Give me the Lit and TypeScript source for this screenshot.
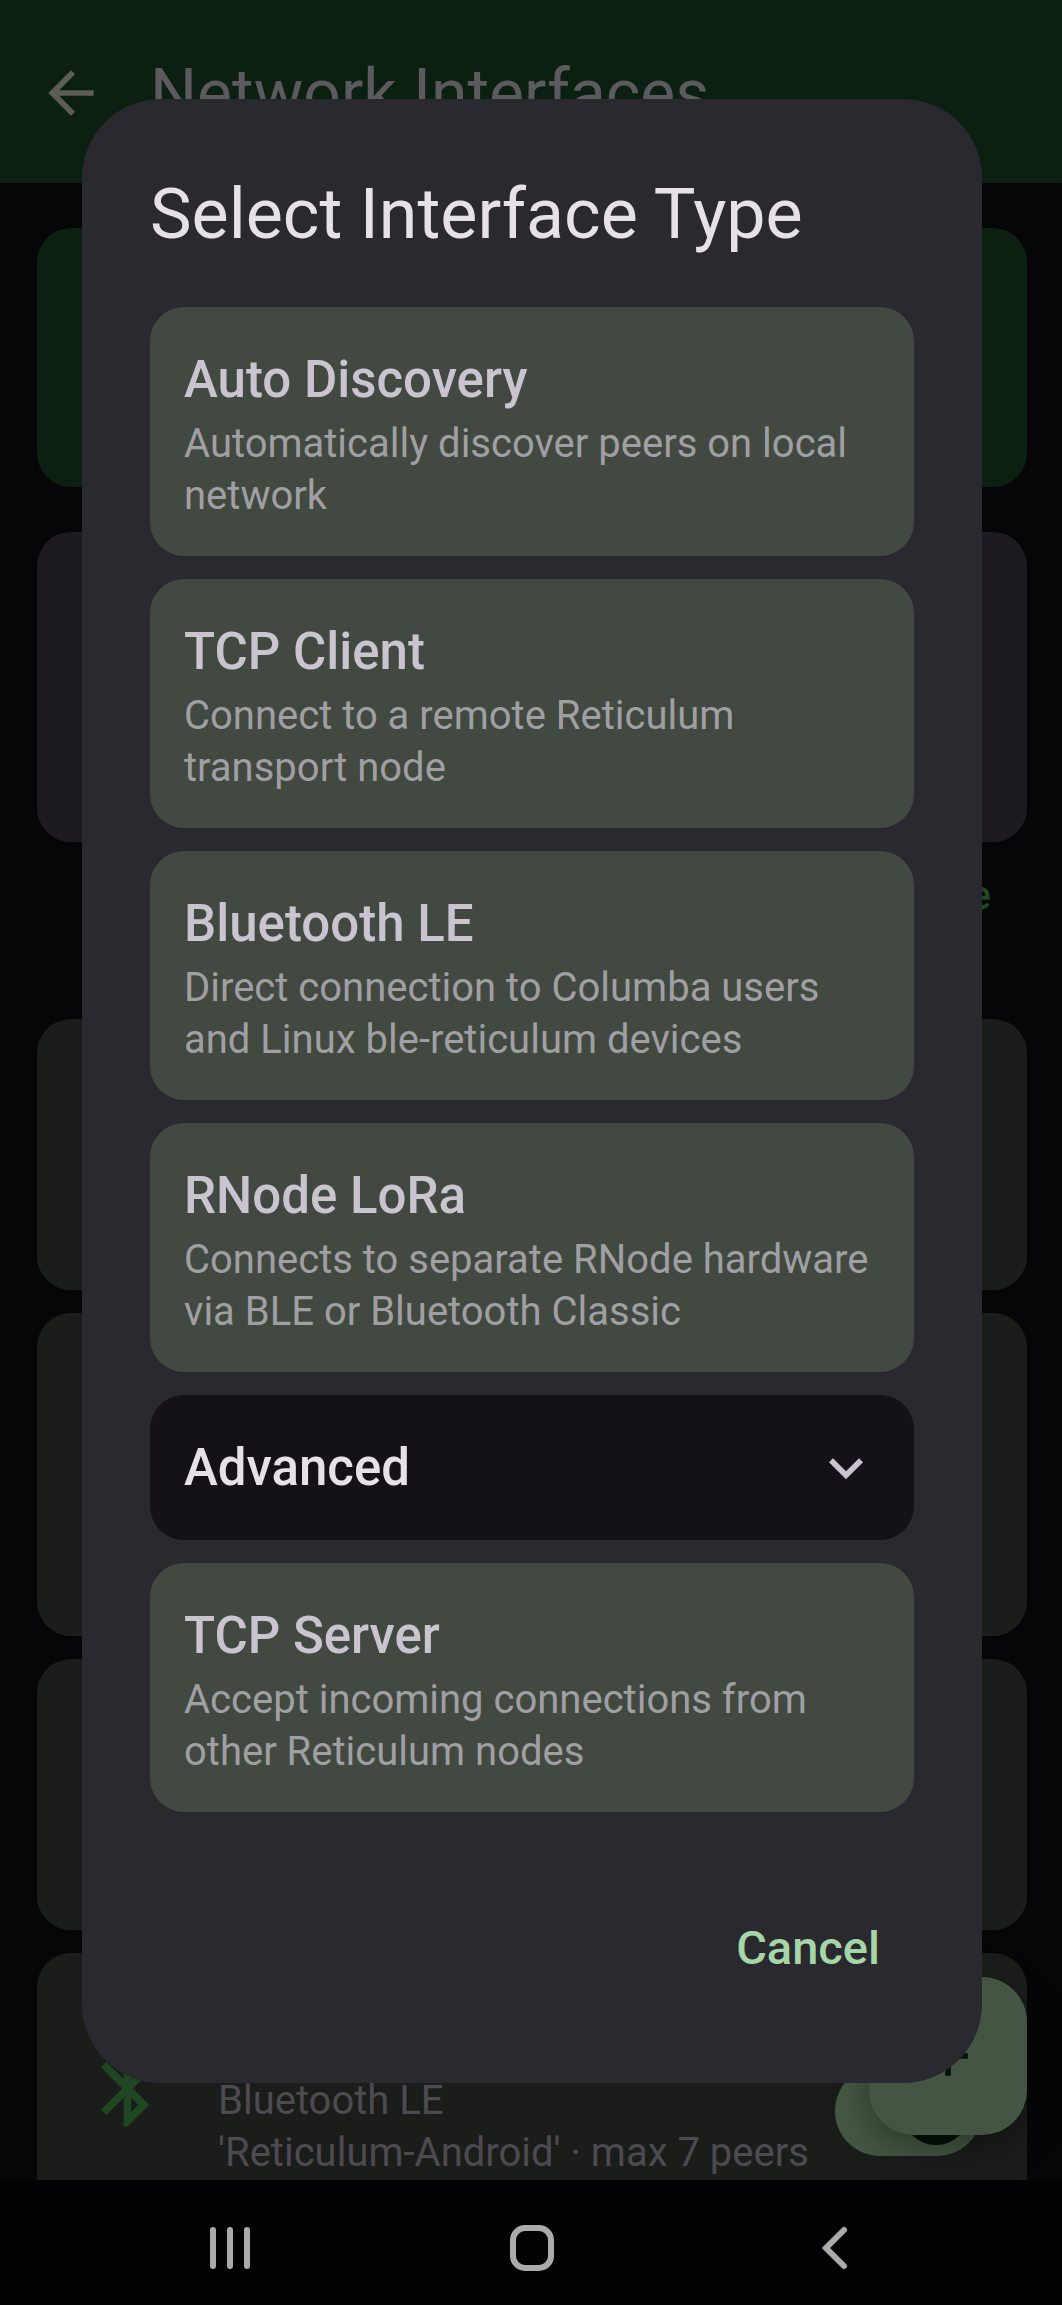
import { LitElement, html, css, svg, nothing } from "lit";
import { customElement, property } from "lit/decorators.js";

const icons = {
  back: svg`<path d="M20 11H7.83l5.59-5.59L12 4l-8 8 8 8 1.41-1.41L7.83 13H20v-2z"/>`,
  expand: svg`<path d="M16.59 8.59 12 13.17 7.41 8.59 6 10l6 6 6-6z"/>`,
  add: svg`<path d="M19 13h-6v6h-2v-6H5v-2h6V5h2v6h6v2z"/>`,
  bluetooth: svg`<path d="M17.71 7.71 12 2h-1v7.59L6.41 5 5 6.41 10.59 12 5 17.59 6.41 19 11 14.41V22h1l5.71-5.71-4.3-4.29 4.3-4.29zM13 5.83l1.88 1.88L13 9.59V5.83zm1.88 10.46L13 18.17v-3.76l1.88 1.88z"/>`,
};

interface Choice {
  name: string;
  detail: string;
}

const basic: Choice[] = [
  { name: "Auto Discovery", detail: "Automatically discover peers on local network" },
  { name: "TCP Client", detail: "Connect to a remote Reticulum transport node" },
  { name: "Bluetooth LE", detail: "Direct connection to Columba users and Linux ble-reticulum devices" },
  { name: "RNode LoRa", detail: "Connects to separate RNode hardware via BLE or Bluetooth Classic" },
];

const advanced: Choice[] = [
  { name: "TCP Server", detail: "Accept incoming connections from other Reticulum nodes" },
];

@customElement("interface-choice")
export class InterfaceChoice extends LitElement {
  @property() name = "";
  @property() detail = "";
  @property({ type: Boolean }) group = false;

  static styles = css`
    :host {
      display: block;
    }
    .choice {
      display: flex;
      align-items: center;
      justify-content: space-between;
      width: 100%;
      padding: 34px;
      border: 0;
      border-radius: 34px;
      background: #424940;
      color: #cac4d0;
      font: inherit;
      text-align: left;
    }
    .choice.group {
      background: #141218;
      color: #e6e0e9;
    }
    .name {
      display: block;
      font-size: 51px;
      font-weight: 500;
      line-height: 77px;
    }
    .detail {
      display: block;
      font-size: 40px;
      line-height: 52px;
      color: #a09fa3;
    }
    .chevron {
      width: 68px;
      height: 68px;
      fill: #cac4d0;
    }
  `;

  render() {
    return html`<button
      class=${this.group ? "choice group" : "choice"}
      type="button"
      aria-expanded=${this.group ? "true" : nothing}
    >
      <span>
        <span class="name">${this.name}</span>
        ${this.detail ? html`<span class="detail">${this.detail}</span>` : nothing}
      </span>
      ${this.group
        ? html`<svg class="chevron" viewBox="0 0 24 24" aria-hidden="true">${icons.expand}</svg>`
        : nothing}
    </button>`;
  }
}

@customElement("app-root")
export class AppRoot extends LitElement {
  static styles = css`
    :host {
      display: block;
      font-family: Roboto, "Liberation Sans", sans-serif;
    }
    * {
      box-sizing: border-box;
    }
    button {
      border: 0;
      padding: 0;
      background: none;
      font: inherit;
    }
    .screen {
      display: flex;
      flex-direction: column;
      min-height: 100vh;
      background: #060608;
    }
    .stage {
      flex: 1;
      display: grid;
      grid-template-columns: minmax(0, 1fr);
      position: relative;
    }
    .page,
    .overlay {
      grid-area: 1 / 1;
    }
    .page {
      height: 0;
      min-height: 100%;
      overflow: hidden;
    }
    .appbar {
      display: flex;
      align-items: center;
      gap: 45px;
      height: 183px;
      padding: 3px 37px 0;
      background: #0c2011;
      color: #5c5a5e;
    }
    .back {
      display: flex;
    }
    .icon {
      width: 68px;
      height: 68px;
      fill: currentColor;
    }
    .back .icon {
      fill: #5c5d57;
    }
    .appbar h1 {
      margin: 0;
      font-size: 66px;
      font-weight: 400;
      line-height: 95px;
    }
    .list {
      display: flex;
      flex-direction: column;
      gap: 23px;
      padding: 45px 35px 45px 37px;
    }
    .card {
      flex: none;
      min-height: 271px;
      border-radius: 34px;
      background: #1b1d1a;
    }
    .card.status {
      min-height: 259px;
      margin-bottom: 22px;
      background: #0c2011;
    }
    .card.info {
      min-height: 310px;
      background: #1d1a21;
    }
    .card.tall {
      min-height: 323px;
    }
    .section {
      display: flex;
      justify-content: flex-end;
      align-items: flex-start;
      min-height: 131px;
      padding: 0 36px;
    }
    .link {
      font-size: 40px;
      font-weight: 500;
      line-height: 61px;
      color: #1f4722;
    }
    .entry {
      display: flex;
      align-items: center;
      padding: 45px;
      color: #4d4a51;
    }
    .entry .glyph {
      flex: none;
      width: 91px;
      height: 91px;
      margin-right: 45px;
      fill: #1f4722;
    }
    .entry .text {
      flex: 1;
      min-width: 0;
      font-size: 40px;
      line-height: 52px;
    }
    .entry h2 {
      margin: 0;
      font-size: 51px;
      font-weight: 500;
      line-height: 77px;
    }
    .entry p {
      margin: 0;
    }
    .toggle {
      flex: none;
      display: flex;
      align-items: center;
      align-self: flex-end;
      height: 136px;
    }
    .toggle input {
      appearance: none;
      display: flex;
      align-items: center;
      justify-content: flex-end;
      width: 147px;
      height: 90px;
      margin: 0;
      padding: 0 12px;
      border-radius: 45px;
      background: #445843;
    }
    .toggle input::before {
      content: "";
      width: 68px;
      height: 68px;
      border-radius: 50%;
      background: #031308;
    }
    .fab {
      position: absolute;
      right: 35px;
      bottom: 45px;
      display: grid;
      place-items: center;
      width: 158px;
      height: 158px;
      border-radius: 45px;
      background: #445643;
      color: #031308;
      box-shadow: 0 12px 36px rgba(0, 0, 0, 0.36);
    }
    .overlay {
      display: grid;
      align-content: center;
      padding: 68px 80px 66px 82px;
      position: relative;
    }
    .dialog {
      padding: 68px;
      border-radius: 79px;
      background: #2b2930;
    }
    .dialog h2 {
      margin: 0 0 45px;
      font-size: 70px;
      font-weight: 400;
      line-height: 95px;
      color: #e6e0e9;
    }
    .choices {
      display: flex;
      flex-direction: column;
      gap: 23px;
    }
    .actions {
      display: flex;
      justify-content: flex-end;
      margin-top: 68px;
    }
    .cancel {
      height: 135px;
      padding: 0 34px;
      font-size: 47px;
      font-weight: 500;
      color: #a5d6a7;
    }
    .system {
      display: grid;
      grid-template-columns: repeat(3, 302px);
      justify-content: center;
      height: 125px;
      padding-left: 2px;
      background: #020204;
    }
    .system button {
      display: grid;
      place-items: center;
      padding-top: 11px;
    }
    .system svg {
      width: 52px;
      height: 52px;
      fill: none;
      stroke: #ababab;
      stroke-width: 6;
      stroke-linecap: round;
    }
  `;

  private choice(c: Choice) {
    return html`<interface-choice .name=${c.name} .detail=${c.detail}></interface-choice>`;
  }

  render() {
    return html`
      <div class="screen">
        <div class="stage">
          <div class="page">
            <header class="appbar">
              <button class="back" type="button" aria-label="Back">
                <svg class="icon" viewBox="0 0 24 24">${icons.back}</svg>
              </button>
              <h1>Network Interfaces</h1>
            </header>
            <main class="list">
              <section class="card status"></section>
              <section class="card info"></section>
              <div class="section"><button class="link" type="button">Manage</button></div>
              <section class="card"></section>
              <section class="card tall"></section>
              <section class="card"></section>
              <section class="card entry">
                <svg class="glyph" viewBox="0 0 24 24" aria-hidden="true">${icons.bluetooth}</svg>
                <div class="text">
                  <h2 id="entry-name">Bluetooth LE</h2>
                  <p>Bluetooth LE</p>
                  <p>'Reticulum-Android' · max 7 peers</p>
                </div>
                <div class="toggle">
                  <input type="checkbox" role="switch" checked aria-labelledby="entry-name" />
                </div>
              </section>
            </main>
            <button class="fab" type="button" aria-label="Add interface">
              <svg class="icon" viewBox="0 0 24 24">${icons.add}</svg>
            </button>
          </div>
          <div class="overlay">
            <div class="dialog" role="dialog" aria-modal="true" aria-labelledby="dialog-title">
              <h2 id="dialog-title">Select Interface Type</h2>
              <div class="choices">
                ${basic.map((c) => this.choice(c))}
                <interface-choice name="Advanced" group></interface-choice>
                ${advanced.map((c) => this.choice(c))}
              </div>
              <div class="actions"><button class="cancel" type="button">Cancel</button></div>
            </div>
          </div>
        </div>
        <nav class="system" aria-label="System">
          <button type="button" aria-label="Recent apps">
            <svg viewBox="0 0 52 52"><path d="M9 8v36M26 8v36M43 8v36" /></svg>
          </button>
          <button type="button" aria-label="Home">
            <svg viewBox="0 0 52 52"><rect x="7" y="6" width="38" height="40" rx="12" /></svg>
          </button>
          <button type="button" aria-label="Previous">
            <svg viewBox="0 0 52 52"><path d="M36 8 18 26l18 18" stroke-linejoin="miter" /></svg>
          </button>
        </nav>
      </div>
    `;
  }
}
